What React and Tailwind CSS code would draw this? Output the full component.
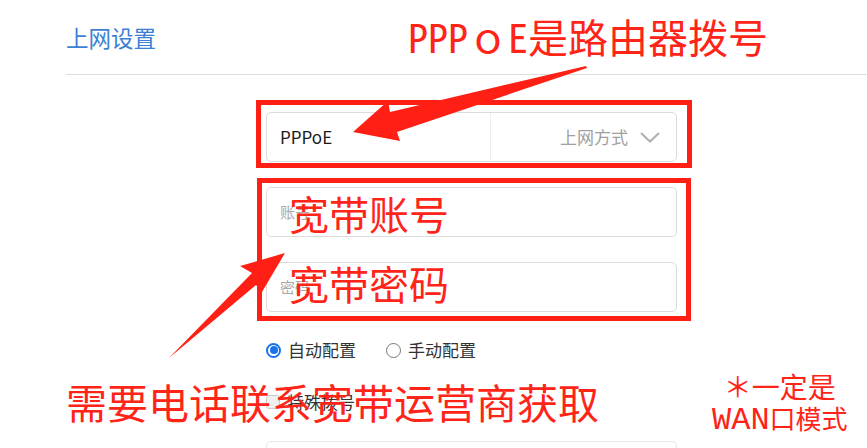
import React from 'react';

const ui = { fontFamily: '"Noto Sans CJK SC", "Noto Sans", sans-serif' };
const note = { fontFamily: '"Noto Sans Mono CJK SC", "Noto Sans CJK SC", sans-serif' };

function Radio({ checked, label }) {
  return (
    <label className="flex items-center gap-[7px]">
      {checked ? (
        <span className="flex h-[15px] w-[15px] items-center justify-center rounded-full border-2 border-[#1a73e8] bg-white">
          <span className="h-[8px] w-[8px] rounded-full bg-[#1a73e8]" />
        </span>
      ) : (
        <span className="h-[15px] w-[15px] rounded-full border border-[#777777] bg-white" />
      )}
      <span className="text-[17px] leading-[20px] text-[#333333]">{label}</span>
    </label>
  );
}

export default function App() {
  return (
    <div className="relative h-[448px] w-[867px] overflow-hidden bg-white" style={ui}>
      <div className="pl-[66px]">
        <h1 className="h-[74px] pt-[24px] text-[22.5px] leading-[26px] text-[#3c7fd3]">上网设置</h1>
        <div className="border-t border-[#dddddd]" />
      </div>

      <div className="ml-[266px] flex w-[411px] flex-col pt-[37px]">
        <div className="flex h-[50px] items-stretch rounded-[5px] border border-[#dcdcdc]">
          <div className="flex w-[224px] items-center border-r border-[#eeeeee] pl-[13px] text-[17px] text-[#1a1a1a]">PPPoE</div>
          <div className="flex flex-1 items-center justify-end gap-[12px] pr-[16px]">
            <span className="text-[17px] text-[#a0a0a0]">上网方式</span>
            <svg width="20" height="11" viewBox="0 0 20 11" fill="none">
              <path d="M1 1 L10 9.5 L19 1" stroke="#b0b0b0" strokeWidth="2" />
            </svg>
          </div>
        </div>

        <div className="mt-[25px] flex h-[50px] items-center rounded-[5px] border border-[#dcdcdc] pl-[13px] text-[15px] text-[#aaaaaa]">账号</div>
        <div className="mt-[25px] flex h-[50px] items-center rounded-[5px] border border-[#dcdcdc] pl-[13px] text-[15px] text-[#aaaaaa]">密码</div>

        <div className="mt-[28px] flex h-[20px] items-center gap-[30px]">
          <Radio checked label="自动配置" />
          <Radio label="手动配置" />
        </div>

        <label className="mt-[32px] flex h-[20px] items-center gap-[7px]">
          <span className="h-[14px] w-[14px] rounded-[3px] border border-[#cccccc] bg-[#f0f0f0]" />
          <span className="text-[17px] leading-[20px] text-[#333333]">特殊拨号</span>
        </label>

        <div className="mt-[29px] h-[50px] rounded-[5px] border border-[#e8e8e8]" />
      </div>

      {/* annotations */}
      <div className="absolute left-[256px] top-[100px] h-[68px] w-[436px] border-[5px] border-[#ff1f14]" />
      <div className="absolute left-[257px] top-[178px] h-[143px] w-[434px] border-[5px] border-[#ff1f14]" />

      <svg className="pointer-events-none absolute left-0 top-0" width="867" height="448">
        <polygon points="586,66 390,112 388,101 353,132 400,141 397,132 587,68" fill="#ff1f14" />
        <polygon points="285,253 240,266 252,273 169,358 256,285 262,292" fill="#ff1f14" />
      </svg>

      <div className="absolute left-[408px] top-[14px] whitespace-nowrap text-[40px] font-light leading-[44px] text-[#ff2418]" style={note}>PPPｏE是路由器拨号</div>
      <div className="absolute left-[289px] top-[191px] whitespace-nowrap text-[40px] font-light leading-[44px] text-[#ff2418]" style={note}>宽带账号</div>
      <div className="absolute left-[289px] top-[261px] whitespace-nowrap text-[40px] font-light leading-[44px] text-[#ff2418]" style={note}>宽带密码</div>
      <div className="absolute left-[66px] top-[378px] whitespace-nowrap text-[41px] font-light leading-[46px] text-[#ff2418]" style={note}>需要电话联系宽带运营商获取</div>
      <div className="absolute left-[712px] top-[370px] flex flex-col items-center font-light text-[#ff2418]" style={note}>
        <span className="text-[28px] leading-[32px]">＊一定是</span>
        <span className="whitespace-nowrap text-[26px] leading-[32px]">
          <span className="text-[32px]" style={{ fontFamily: '"Liberation Mono", monospace' }}>WAN</span>口模式
        </span>
      </div>
    </div>
  );
}
